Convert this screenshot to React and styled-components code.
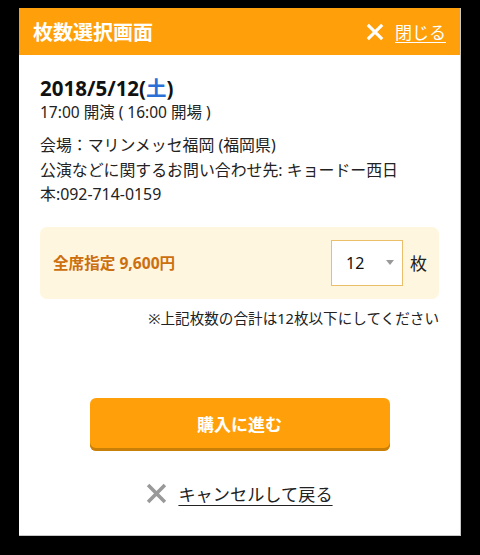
import styled, { createGlobalStyle } from 'styled-components';

const GlobalStyle = createGlobalStyle`
  html, body {
    margin: 0;
    padding: 0;
    background: #000;
  }
  body {
    font-family: "Noto Sans", "Noto Sans CJK JP", sans-serif;
    color: #222;
  }
`;

const Overlay = styled.div`
  width: 480px;
  height: 555px;
  padding-top: 8px;
  box-sizing: border-box;
  display: flex;
  justify-content: center;
  align-items: flex-start;
`;

const Modal = styled.div`
  width: 442px;
  height: 528px;
  background: #fff;
  border-right: 1px solid #c8c8c8;
  border-bottom: 1px solid #c8c8c8;
  box-sizing: border-box;
  display: flex;
  flex-direction: column;
`;

const Header = styled.header`
  height: 47px;
  background: #ffa00a;
  display: flex;
  align-items: center;
  justify-content: space-between;
  padding: 0 14px 0 14px;
  color: #fff;
`;

const Title = styled.h1`
  margin: 0;
  font-size: 20px;
  font-weight: 700;
`;

const CloseLink = styled.a`
  display: flex;
  align-items: center;
  gap: 11px;
  color: #fff;
  font-size: 17px;
  text-decoration: underline;
  text-underline-offset: 3px;
  cursor: pointer;
`;

const Body = styled.div`
  flex: 1;
  padding: 20px 21px 0 21px;
  display: flex;
  flex-direction: column;
`;

const DateLine = styled.div`
  font-size: 20.5px;
  font-weight: 700;
  line-height: 26px;
  color: #111;

  .dow {
    color: #2a6fd6;
  }
`;

const TimeLine = styled.div`
  font-size: 15.5px;
  line-height: 22px;
  margin-bottom: 10px;
`;

const Info = styled.p`
  margin: 0;
  font-size: 15.9px;
  line-height: 24.5px;
`;

const TicketBox = styled.div`
  margin-top: 20px;
  height: 72px;
  background: #fff6df;
  border-radius: 7px;
  display: flex;
  align-items: center;
  padding: 0 12px 0 13px;
`;

const TicketName = styled.div`
  flex: 1;
  color: #cc6f10;
  font-weight: 700;
  font-size: 15.6px;
`;

const SelectBox = styled.div`
  width: 72px;
  height: 46px;
  box-sizing: border-box;
  border: 1px solid #ebbf6a;
  background: #fff;
  display: flex;
  align-items: center;
  justify-content: space-between;
  padding: 0 8px 0 14px;
  font-size: 16px;
  color: #111;
`;

const Caret = styled.span`
  width: 0;
  height: 0;
  border-left: 4px solid transparent;
  border-right: 4px solid transparent;
  border-top: 5px solid #999;
`;

const Unit = styled.span`
  margin-left: 7px;
  font-size: 17px;
`;

const Note = styled.div`
  margin-top: 8px;
  text-align: right;
  font-size: 14.6px;
  color: #222;
`;

const Actions = styled.div`
  margin-top: 70px;
  display: flex;
  flex-direction: column;
  align-items: center;
  gap: 30px;
`;

const BuyButton = styled.button`
  width: 300px;
  height: 53px;
  border: none;
  border-radius: 6px;
  background: #ffa00a;
  box-shadow: inset 0 -3px 0 #c98008;
  color: #fff;
  font-family: inherit;
  font-size: 17px;
  font-weight: 700;
  padding-bottom: 2px;
  cursor: pointer;
`;

const CancelLink = styled.a`
  display: flex;
  align-items: center;
  gap: 11px;
  font-size: 17.2px;
  color: #222;
  text-decoration: underline;
  text-underline-offset: 4px;
  cursor: pointer;
`;

const Cross = ({ color, size = 18, stroke = 3 }) => (
  <svg width={size} height={size} viewBox="0 0 20 20">
    <path d="M2 2 L18 18 M18 2 L2 18" stroke={color} strokeWidth={stroke} strokeLinecap="butt" />
  </svg>
);

export default function App() {
  return (
    <>
      <GlobalStyle />
      <Overlay>
        <Modal>
          <Header>
            <Title>枚数選択画面</Title>
            <CloseLink>
              <Cross color="#fff" size={18} stroke={3.4} />
              閉じる
            </CloseLink>
          </Header>
          <Body>
            <DateLine>
              2018/5/12(<span className="dow">土</span>)
            </DateLine>
            <TimeLine>17:00 開演 ( 16:00 開場 )</TimeLine>
            <Info>
              会場：マリンメッセ福岡 (福岡県)
              <br />
              公演などに関するお問い合わせ先: キョードー西日本:092-714-0159
            </Info>
            <TicketBox>
              <TicketName>全席指定 9,600円</TicketName>
              <SelectBox>
                12
                <Caret />
              </SelectBox>
              <Unit>枚</Unit>
            </TicketBox>
            <Note>※上記枚数の合計は12枚以下にしてください</Note>
            <Actions>
              <BuyButton>購入に進む</BuyButton>
              <CancelLink>
                <Cross color="#999" size={21} stroke={3.4} />
                キャンセルして戻る
              </CancelLink>
            </Actions>
          </Body>
        </Modal>
      </Overlay>
    </>
  );
}
